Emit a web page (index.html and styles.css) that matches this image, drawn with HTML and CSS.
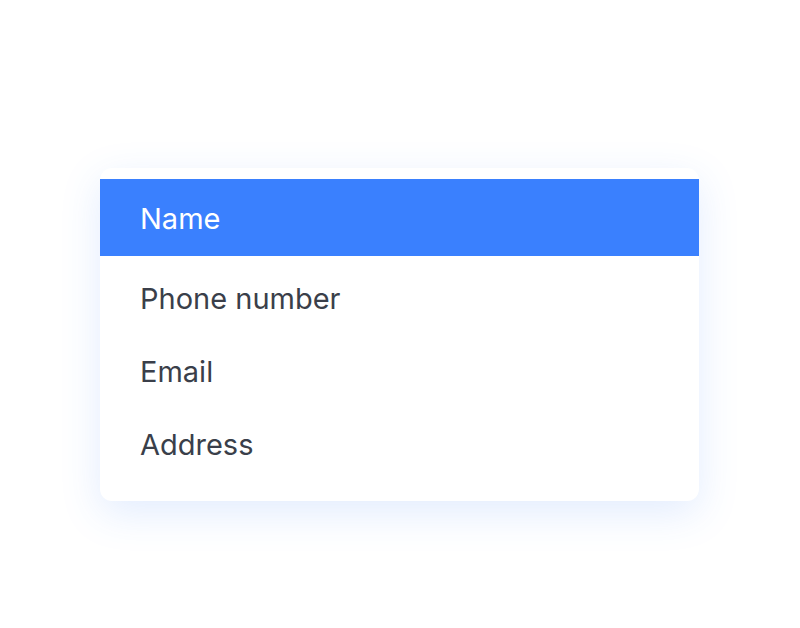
FILE: index.html
```html
<!DOCTYPE html>
<html>
<head>
<meta charset="utf-8">
<link rel="stylesheet" href="styles.css">
</head>
<body>
<div class="stage">
  <ul class="menu">
    <li class="item active">Name</li>
    <li class="item">Phone number</li>
    <li class="item">Email</li>
    <li class="item">Address</li>
  </ul>
</div>
</body>
</html>
```
FILE: styles.css
```css
html, body {
  margin: 0;
  padding: 0;
  background: #ffffff;
}
.stage {
  width: 800px;
  height: 628px;
  padding-top: 168px;
  padding-left: 100px;
  box-sizing: border-box;
}
.menu {
  list-style: none;
  margin: 0;
  width: 599px;
  height: 333px;
  box-sizing: border-box;
  padding: 11px 0 20px;
  background: #ffffff;
  border-radius: 12px;
  box-shadow: 0 12px 40px rgba(59, 130, 246, 0.15);
  font-family: Inter, "Noto Sans", sans-serif;
  font-size: 29px;
  color: #3a3f4a;
}
.item {
  height: 73px;
  display: flex;
  align-items: center;
  padding-left: 40px;
  padding-top: 2px;
  box-sizing: border-box;
}
.item.active {
  height: 77px;
  margin-bottom: 5px;
  background: #3a80fe;
  color: #ffffff;
}
```
